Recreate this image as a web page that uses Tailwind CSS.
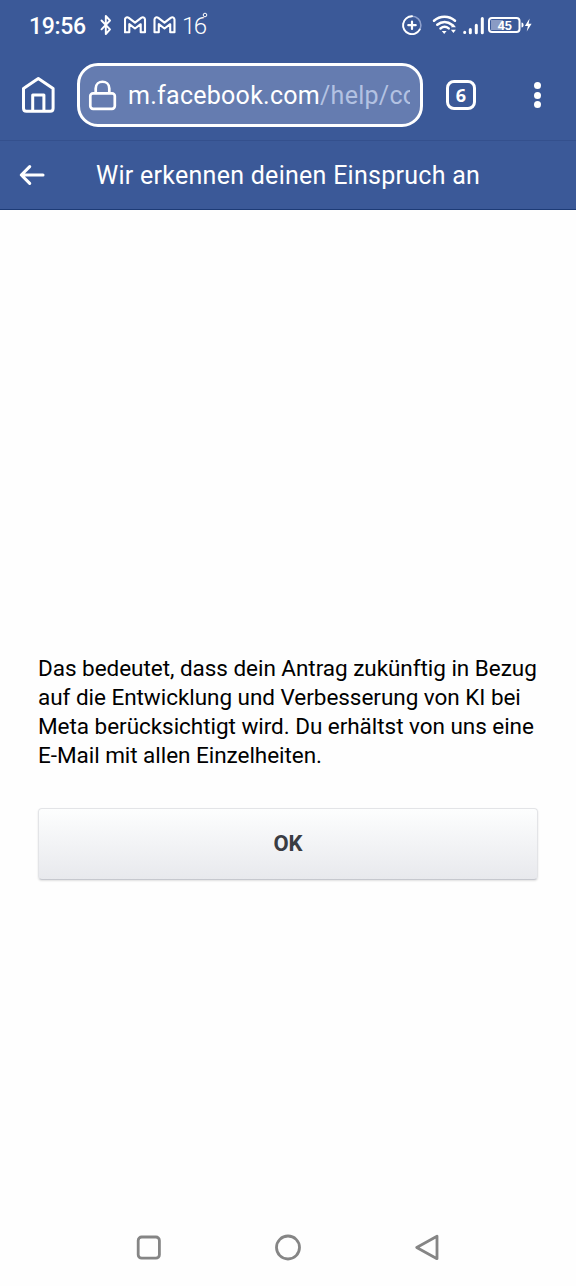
<!DOCTYPE html>
<html lang="de">
<head>
<meta charset="utf-8">
<title>Wir erkennen deinen Einspruch an</title>
<script src="https://cdn.jsdelivr.net/npm/@tailwindcss/browser@4"></script>
</head>
<body class="bg-white font-[Roboto,sans-serif]">
<div class="flex h-[1286px] w-[576px] flex-col overflow-hidden bg-[#fefefe]">
  <!-- status bar -->
  <div class="flex h-[50px] items-center bg-[#3b5998] text-white">
    <div class="ml-[29px] w-[71px] whitespace-nowrap pt-[3px] text-[23px] leading-[26px] font-medium tracking-[-0.350px]">19:56</div>
    <svg class="w-[24px] h-[50px] shrink-0" viewBox="100 0 24 50" fill="none" stroke="#fff" stroke-width="1.9" stroke-linejoin="round" stroke-linecap="round"><path d="M101.500 20.500l8.500 8.800-4.200 4.700V16l4.200 4.500-8.500 8.800"/></svg>
    <svg class="w-[58px] h-[50px] shrink-0" viewBox="124 0 58 50" fill="none" stroke="#fff" stroke-width="2.100" stroke-linejoin="round"><path id="m" d="M125 32.300V19.500c0-2.300 2.300-2.800 3.800-1.600l6.200 4.800 6.200-4.800c1.500-1.200 3.800-.7 3.800 1.600v12.800h-4.300v-8.100L135 28.500l-5.700-4.300v8.100z"/><use href="#m" x="29.500"/></svg>
    <div class="flex w-[30px] items-start whitespace-nowrap pt-[1px] text-[24px] leading-[26px] font-light tracking-[-1.500px]">16<svg class="-ml-[4px] -mt-[1px] h-[6px] w-[6px] shrink-0" viewBox="0 0 6 6" fill="none" stroke="#fff"><circle cx="3" cy="3" r="1.800"/></svg></div>
    <svg class="ml-auto h-[50px] w-[186px] shrink-0" viewBox="390 0 186 50" fill="none" stroke="#fff" stroke-linecap="round" stroke-linejoin="round">
      <circle cx="412" cy="25.200" r="8.900" stroke="#8ea0cc" stroke-width="1.600"/>
      <path d="M412 16.300a8.900 8.900 0 1 0 7.700 13.300" stroke-width="1.900"/>
      <path d="M412 21.500v7.400M408.300 25.200h7.400" stroke-width="2.200"/>
      <path d="M434 20.800c6-5.300 15-5.300 21 0M437.300 24.800c4.300-3.800 10.300-3.800 14.600 0M440.500 28.500c2.500-2.200 5.700-2.200 8.200-.1" stroke-width="2.500"/>
      <path d="M441.800 31h4.800l-2.400 3zM450.900 27.200h5l-2.500-3.200zM450.900 29.800h5l-2.500 3.200z" fill="#fff" stroke="none"/>
      <path d="M464.700 32.300v.1M470.300 29.500v3.200M476.300 25.200v7.500M482.300 18.500v14.200" stroke-width="3"/>
      <rect x="489" y="17.900" width="30.500" height="14.200" rx="3" fill="#3b5998" stroke-width="2"/>
      <rect x="491" y="20" width="12" height="10" fill="#8a9bc4" stroke="none"/>
      <path d="M521.500 22.500c2.800.3 2.800 4.700 0 5z" fill="#fff" stroke="none"/>
      <path d="M529.600 18.500l-4.700 7.500h3l-1.200 5.600 4.900-7.800h-3z" fill="#fff" stroke="none"/>
      <text x="504.800" y="29.500" text-anchor="middle" font-family="Liberation Sans" font-weight="700" font-size="12.800" fill="#fff" stroke="none">45</text>
    </svg>
  </div>
  <!-- browser toolbar -->
  <div class="flex h-[91px] shrink-0 items-start border-b border-[#34508d] bg-[#3b5998] pt-[13px] text-white">
    <svg class="ml-[20px] mt-[11px] h-[42px] w-[37px] shrink-0" viewBox="20 74 37 42" fill="none" stroke="#fff" stroke-width="3" stroke-linejoin="round"><path d="M23.500 88.500L38.300 78.500l14.800 10v19.800q0 3-3 3H26.500q-3 0-3-3z"/><path d="M32.700 111V95h11.200v16"/></svg>
    <div class="ml-[20px] flex h-[64px] w-[346px] shrink-0 items-center rounded-[21px] border-[3px] border-white bg-[#657cb0]">
      <svg class="ml-[7px] h-[36px] w-[32px] shrink-0" viewBox="87 77 32 36" fill="none" stroke="#fff" stroke-width="2.700"><rect x="90.300" y="93.300" width="24.500" height="15.500" rx="2.800"/><path d="M95.700 93v-4.500c0-9 13.600-9 13.600 0V93"/></svg>
      <div class="ml-[9px] mt-[2px] w-[282px] overflow-hidden whitespace-nowrap text-[25px] leading-[34px] tracking-[0.270px]">m.facebook.com<span class="text-[#b3c2e2]">/help/co</span></div>
    </div>
    <div class="ml-[23px] mt-[17px] flex h-[30px] w-[30px] shrink-0 items-center justify-center rounded-[8px] border-[3px] border-white font-['Open_Sans',sans-serif] text-[18px] leading-none font-bold">6</div>
    <div class="ml-[58px] mt-[19px] flex flex-col gap-[2.500px]">
      <i class="size-[7px] rounded-full bg-white"></i><i class="size-[7px] rounded-full bg-white"></i><i class="size-[7px] rounded-full bg-white"></i>
    </div>
  </div>
  <!-- page header -->
  <div class="flex h-[69px] shrink-0 items-center border-b border-[#1d3b76] bg-[#3b5998] text-white">
    <svg class="ml-[18px] h-[24px] w-[28px] shrink-0" viewBox="18 163 28 24" fill="none" stroke="#fff" stroke-width="3.100" stroke-linecap="round" stroke-linejoin="round"><path d="M43 175H21.500M29.700 166.700l-8.400 8.300 8.400 8.300"/></svg>
    <h1 class="ml-[50px] mt-[2px] whitespace-nowrap text-[25px] leading-[30px] tracking-[0.270px]">Wir erkennen deinen Einspruch an</h1>
  </div>
  <!-- confirmation -->
  <main class="flex-1 px-[38px] pt-[444px] text-black">
    <p class="whitespace-nowrap text-[22.500px] leading-[29px] tracking-[-0.040px]">Das bedeutet, dass dein Antrag zukünftig in Bezug<br>auf die Entwicklung und Verbesserung von KI bei<br>Meta berücksichtigt wird. Du erhältst von uns eine<br>E-Mail mit allen Einzelheiten.</p>
    <button class="mt-[38px] block h-[72px] w-full rounded-[4px] border border-[#e3e4e7] border-b-[#c6c8ce] bg-linear-to-b from-[#fdfefe] to-[#e8e9ed] text-[22px] leading-[26px] font-bold text-[#3a3d43] shadow-[0_1px_2px_rgba(0,0,0,0.12)]">OK</button>
  </main>
  <!-- system navigation -->
  <nav class="flex h-[76px] items-center">
    <svg class="h-[76px] w-[576px]" viewBox="0 1210 576 76" fill="none" stroke="#858585" stroke-width="2.800" stroke-linejoin="round"><rect x="138.200" y="1237" width="21.200" height="21.200" rx="3.500"/><circle cx="288" cy="1247.500" r="11.500"/><path d="M437 1236.300v22.400l-20.300-11.200z"/></svg>
  </nav>
</div>
</body>
</html>
